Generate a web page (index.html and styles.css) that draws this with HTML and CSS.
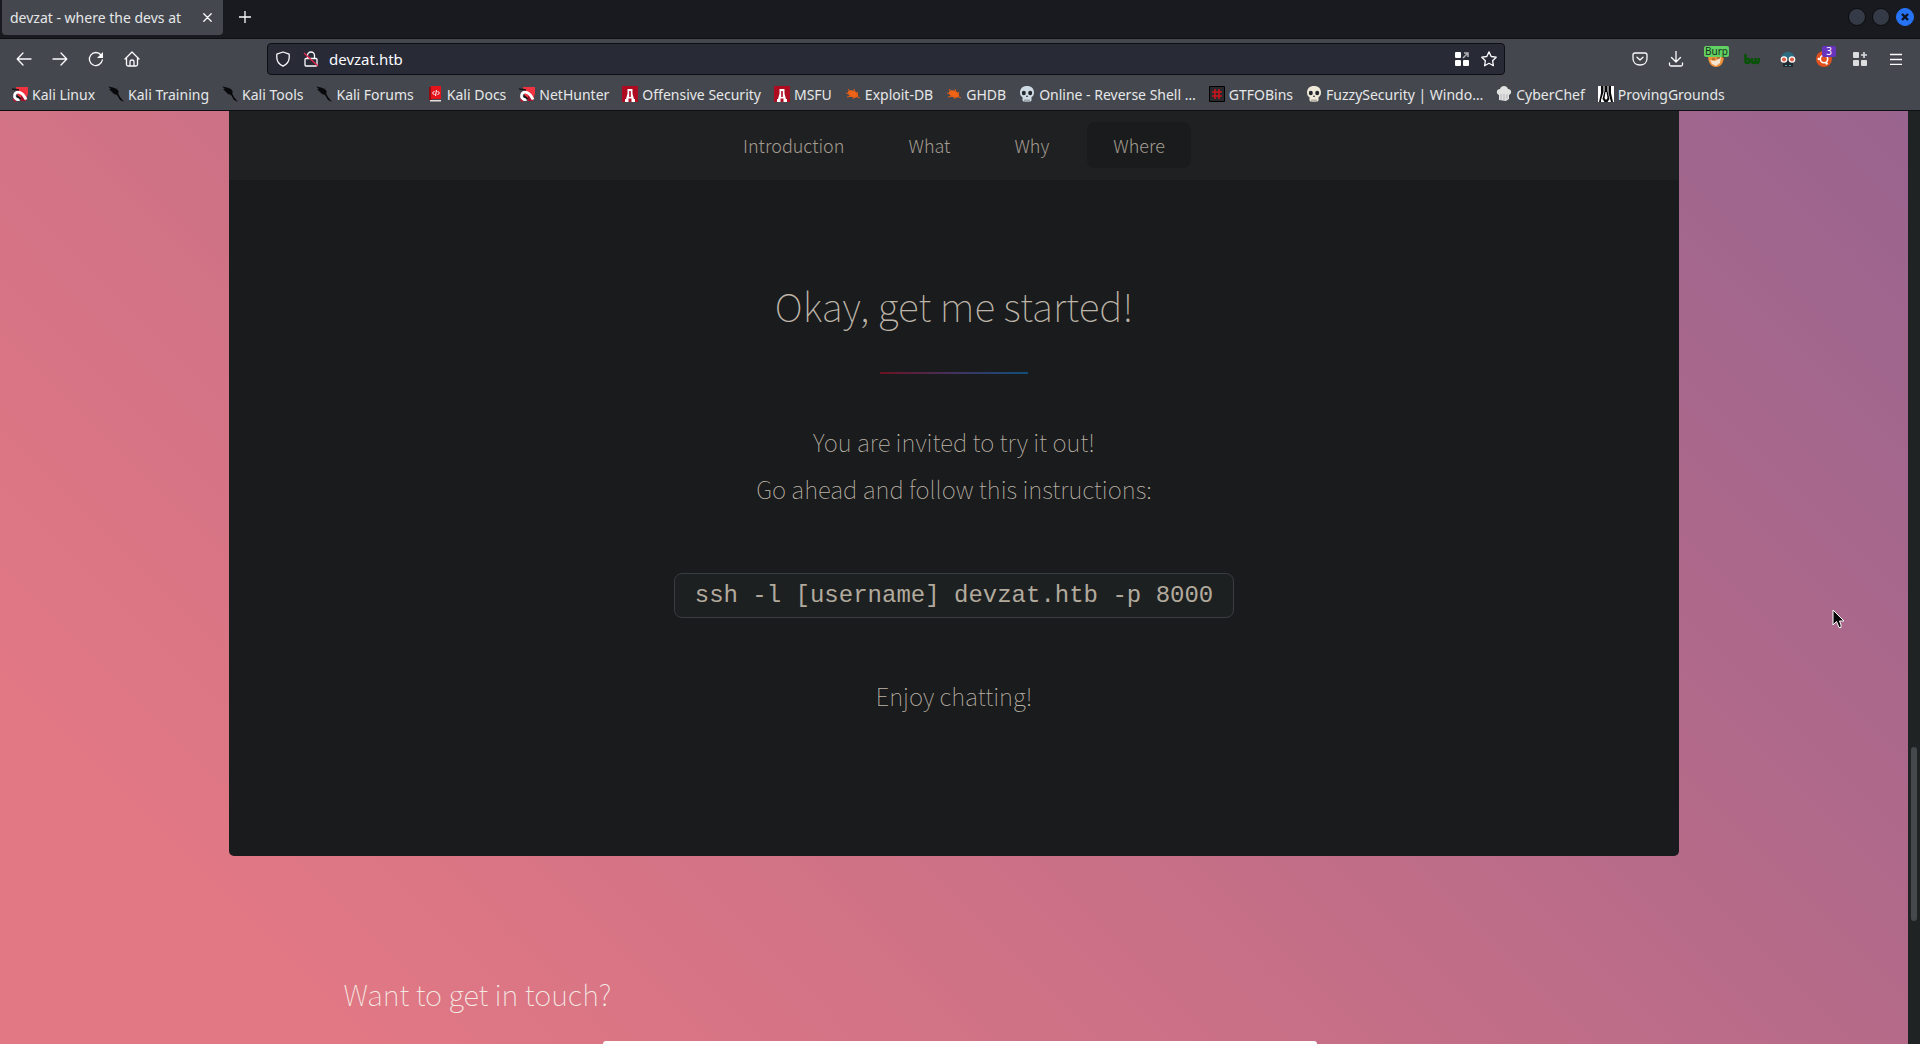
FILE: index.html
```html
<!DOCTYPE html>
<html lang="en">
<head>
<meta charset="utf-8">
<title>devzat - where the devs at</title>
<link rel="stylesheet" href="styles.css">
</head>
<body>
<svg class="defs" aria-hidden="true">
  <symbol id="dragon" viewBox="0 0 16 16"><path fill="#f2333f" d="M4 1h12v6l-2 8H9L5 8z"/><path fill="#a30f2c" d="M9 9l5 6h-5z"/><path fill="none" stroke="#fff" stroke-width="2.800" d="M14 13.500C12 9 10 7 7.500 6.300 4 5.500 1.800 8 2.500 10.800c.6 2.300 3 3.200 5 2.700"/><path stroke="#17181c" stroke-width="1.600" fill="none" d="M0 3l7 1M5 10l4 3"/><path stroke="#b81735" stroke-width="1.500" d="M1 13l3 3"/></symbol>
  <symbol id="kali" viewBox="0 0 16 16"><path fill="#08090a" d="M0 .5l5 1 4 1.500 2 3-1 1 2 4 4 5-4-2-3-5-3-1-2-2-3-3 2 0z"/></symbol>
  <symbol id="offsec" viewBox="0 0 16 16"><path fill="#ad0b20" d="M0 0h16v16H0z"/><path fill="#fff" d="M5.500 3h5v4.500l1.500 5.500h1v3h-3.500v-3.500h-3V16H3v-3h1l1.500-5.500z"/><path fill="#ad0b20" d="M7.200 5h1.600v6H7.200z"/></symbol>
  <symbol id="bug" viewBox="0 0 16 16"><ellipse cx="8" cy="8" rx="5.500" ry="3.200" transform="rotate(25 8 8)" fill="#f06418"/><path stroke="#e65c10" d="M3 3l3 4M9 3l1 4M1 7l4 1M13 6l-2 3M2 11l5-1M8 13l2-3M15 12l-4-2"/></symbol>
  <symbol id="skull" viewBox="0 0 16 16"><path fill="currentColor" d="M8 0c4.500 0 7 2.700 7 6.500 0 2.500-1 4-2.500 4.700V14c0 1.500-1.500 2-4.500 2s-4.500-.5-4.500-2v-2.800C2 10.500 1 9 1 6.500 1 2.700 3.500 0 8 0z"/><ellipse cx="4.800" cy="7" rx="2" ry="2.300" fill="#25282c"/><ellipse cx="11.200" cy="7" rx="2" ry="2.300" fill="#25282c"/><path fill="#25282c" d="M8 9l1 2H7z"/><path stroke="#25282c" stroke-width=".6" d="M6 13.500V16M8 13.500V16M10 13.500V16"/></symbol>
</svg>

<header class="browser">
  <div class="tabs">
    <div class="tab"><span>devzat - where the devs at</span>
      <button class="plain" aria-label="Close tab"><svg width="9" height="9" viewBox="0 0 9 9"><path class="line" d="M.8.8l7.400 7.400M8.200.8L.8 8.200"/></svg></button></div>
    <button class="plain new-tab" aria-label="New tab"><svg width="12" height="12" viewBox="0 0 12 12"><path class="line" d="M6 0v12M0 6h12"/></svg></button>
    <div class="window-buttons">
      <button class="dot" aria-label="Minimize"></button><button class="dot" aria-label="Maximize"></button><button class="dot close" aria-label="Close"><svg width="8" height="8" viewBox="0 0 8 8"><path d="M1 1l6 6M7 1L1 7" stroke="#0d1220" stroke-width="2.400"/></svg></button>
    </div>
  </div>

  <div class="toolbar">
    <div class="tools">
      <button class="tool" aria-label="Back"><svg width="16" height="16" viewBox="0 0 16 16"><path class="line" d="M15 8H1.500M7 2L1.200 8 7 14"/></svg></button>
      <button class="tool" aria-label="Forward"><svg width="16" height="16" viewBox="0 0 16 16"><path class="line" d="M1 8h13.500M9 2l5.800 6L9 14"/></svg></button>
      <button class="tool" aria-label="Reload"><svg width="16" height="16" viewBox="0 0 16 16"><path class="line" d="M14.300 9A6.500 6.500 0 1 1 13 4"/><path fill="#fbfbfe" d="M15 1v6H9z"/></svg></button>
      <button class="tool" aria-label="Home"><svg width="16" height="16" viewBox="0 0 16 16"><path class="line" d="M1 8l7-7 7 7M2.500 7v6.500q0 1.500 1.500 1.500h8q1.500 0 1.500-1.500V7M6 15v-4q0-2 2-2t2 2v4"/></svg></button>
    </div>
    <div class="urlbar">
      <svg width="16" height="16" viewBox="0 0 16 16"><path class="line" d="M8 1l6.200 2.200v3.300c0 4.200-2.700 7-6.200 8.700-3.500-1.700-6.200-4.500-6.200-8.700V3.200z"/></svg>
      <svg class="lock" width="16" height="16" viewBox="0 0 16 16"><path class="line" d="M4.500 7V4.500a3.500 3.500 0 0 1 7 0V7M3 7.500h10q1 0 1 1V14q0 1-1 1H3q-1 0-1-1V8.500q0-1 1-1z"/><path stroke="#e22850" stroke-width="1.500" d="M1 2l14 13"/></svg>
      <input type="text" aria-label="Address" value="devzat.htb">
      <button class="plain" aria-label="Extensions"><svg width="14" height="14" viewBox="0 0 14 14"><g fill="#fff"><rect width="6" height="6" rx="1"/><rect y="8" width="6" height="6" rx="1"/><rect x="8" y="8" width="6" height="6" rx="1"/></g><path stroke="#aeb0b4" stroke-width="1.500" fill="none" d="M8 6l5-5M9 1h4v4"/></svg></button>
      <button class="plain" aria-label="Bookmark"><svg width="16" height="16" viewBox="0 0 16 16"><path class="line" d="M8 .9l2.200 4.600 5 .7-3.600 3.500.8 5L8 12.300l-4.400 2.400.8-5L.8 6.200l5-.7z"/></svg></button>
    </div>
    <div class="tools">
      <button class="tool" aria-label="Pocket"><svg width="16" height="16" viewBox="0 0 16 16"><path class="line" d="M3 2h10q2 0 2 2v3.500c0 4-3 6.500-7 6.500s-7-2.500-7-6.500V4q0-2 2-2zM5 6.200L8 9l3-2.800"/></svg></button>
      <button class="tool download" aria-label="Downloads"><svg width="16" height="16" viewBox="0 0 16 16"><path class="line" d="M8 0v10.500M3.500 6.500L8 11l4.500-4.500M1.500 12v1.500q0 1.500 1.500 1.500h10q1.500 0 1.500-1.500V12"/></svg></button>
      <button class="tool" aria-label="Proxy"><svg width="16" height="16" viewBox="0 0 16 16"><path fill="#ed8e38" d="M0 4l3 1 5-3 5 3 3-1c0 8-3 12-8 12S0 12 0 4z"/><path fill="#f5e4d0" d="M2 9l4 1 3-1 4-3-1 6-4 3-4-2z"/><path stroke="#76502d" d="M4 8h3M9 7h3"/></svg><span class="badge burp">Burp</span></button>
      <button class="tool" aria-label="BuiltWith"><svg width="16" height="12" viewBox="0 0 16 12"><path fill="none" stroke="#075207" stroke-width="2.500" d="M1.500 1v7.500q0 1.500 2 1.500t2-2-2-2h-2M8 5v3q0 2 1.500 2t2-2V5v3q0 2 1.500 2t1.700-2V5"/></svg></button>
      <button class="tool" aria-label="User agent"><svg width="16" height="16" viewBox="0 0 16 16"><path fill="#2c6b80" d="M2 8C1 3 4 1 8 1s7 2 6 7z"/><path fill="#222a31" d="M3 10h10v6H3z"/><circle cx="4" cy="8.500" r="3.300" fill="#fff"/><circle cx="12" cy="8.500" r="3.300" fill="#fff"/><circle cx="4" cy="8.500" r="2.100" fill="#df6048"/><circle cx="12" cy="8.500" r="2.100" fill="#df6048"/><path stroke="#5aa1b4" d="M5 14.500h2M9 14.500h2"/></svg></button>
      <button class="tool" aria-label="Scripts"><svg width="16" height="16" viewBox="0 0 16 16"><circle cx="8" cy="8" r="8" fill="#e0501d"/><circle cx="8" cy="8" r="3.700" fill="none" stroke="#fff" stroke-width="1.600"/><g fill="#fff"><circle cx="2.800" cy="8" r="1.200"/><circle cx="10.600" cy="12.500" r="1.200"/><circle cx="10.600" cy="3.500" r="1.200"/></g></svg><span class="badge count">3</span></button>
      <button class="tool" aria-label="Add-ons"><svg width="14" height="14" viewBox="0 0 14 14"><g fill="#dcdddf"><rect width="6" height="6" rx="1"/><rect y="8" width="6" height="6" rx="1"/><rect x="8" y="8" width="6" height="6" rx="1"/><path d="M10.200 0h1.600v2.200H14v1.600h-2.200V6h-1.600V3.800H8V2.200h2.200z"/></g></svg></button>
      <button class="tool" aria-label="Menu"><svg width="12" height="12" viewBox="0 0 12 12"><path class="line" d="M0 1.500h12M0 6.500h12M0 11.500h12"/></svg></button>
    </div>
  </div>

  <nav class="bookmarks" aria-label="Bookmarks">
    <a href="#"><svg><use href="#dragon"/></svg>Kali Linux</a>
    <a href="#"><svg><use href="#kali"/></svg>Kali Training</a>
    <a href="#"><svg><use href="#kali"/></svg>Kali Tools</a>
    <a href="#"><svg><use href="#kali"/></svg>Kali Forums</a>
    <a href="#"><svg viewBox="0 0 16 16"><path fill="#8e1016" d="M2 1h3v13H2z"/><path fill="#e5141a" d="M4 0h10v13H4z"/><path fill="#e8dcdc" d="M3 14h11v1.500H3z"/><path fill="none" stroke="#fff" d="M7.500 5L5.500 7l2 2M10.500 5l2 2-2 2M9.500 4l-1 6"/></svg>Kali Docs</a>
    <a href="#"><svg><use href="#dragon"/></svg>NetHunter</a>
    <a href="#"><svg><use href="#offsec"/></svg>Offensive Security</a>
    <a href="#"><svg><use href="#offsec"/></svg>MSFU</a>
    <a href="#"><svg><use href="#bug"/></svg>Exploit-DB</a>
    <a href="#"><svg><use href="#bug"/></svg>GHDB</a>
    <a href="#"><svg class="skull-blue"><use href="#skull"/></svg>Online - Reverse Shell …</a>
    <a href="#"><svg viewBox="0 0 16 16"><path fill="#282a2e" stroke="#000" d="M.5.5h15v15H.5z"/><path stroke="#c9141c" stroke-width="1.600" d="M6 3v10M10 3v10M3 6h10M3 10h10"/></svg>GTFOBins</a>
    <a href="#"><svg class="skull-cream"><use href="#skull"/></svg>FuzzySecurity | Windo…</a>
    <a href="#"><svg viewBox="0 0 16 16"><path fill="#e2e2e2" d="M3 14V9C0 8 0 3 4 3c1-4 7-4 8 0 4 0 4 5 1 6v4l-3 2z"/><path stroke="#b5b5b5" d="M5 8v6M8 8v6M11 8v5"/></svg>CyberChef</a>
    <a href="#"><svg viewBox="0 0 16 16"><path fill="#fff" d="M0 0h16v16H0z"/><path fill="#08090a" d="M3 0h2.500v6L3 14v2H1l2-9zM6.500 0h3v5l2 8-2 3h-3l-2-3 2-8zM10.500 0H13v7l2 9h-2l-2.500-9z"/><path fill="#fff" d="M7.500 6h1l1 6-1.500 2-1.500-2z"/></svg>ProvingGrounds</a>
  </nav>
</header>

<div class="viewport">
  <div class="page">
    <main class="wrapper">
      <nav class="site-nav">
        <a href="#intro">Introduction</a><a href="#what">What</a><a href="#why">Why</a><a href="#where" class="active">Where</a>
      </nav>
      <section class="start" id="where">
        <h2>Okay, get me started!</h2>
        <p>You are invited to try it out!<br>Go ahead and follow this instructions:</p>
        <code>ssh -l [username] devzat.htb -p 8000</code>
        <p>Enjoy chatting!</p>
      </section>
    </main>
    <footer class="footer"><h2>Want to get in touch?</h2></footer>
    <div class="popup"></div>
    <svg class="cursor" width="14" height="20" viewBox="0 0 14 20"><path fill="#080808" stroke="#fff" d="M1 1v15l3.500-3.500L7 18.500h2V16l-1.500-4H12z"/></svg>
  </div>
  <div class="scrollbar"><div class="track-top"></div><div class="thumb"></div><div class="track-bottom"></div></div>
</div>
</body>
</html>
```
FILE: styles.css
```css
* { box-sizing: border-box; }
body {
  margin: 0;
  height: 100vh;
  display: flex;
  flex-direction: column;
  overflow: hidden;
  background: #1a1b1d;
  font-family: "Noto Sans", sans-serif;
  font-size: 14px;
}
a { color: inherit; text-decoration: none; }
button { font: inherit; color: inherit; background: none; border: 0; padding: 0; }
svg { display: block; flex: none; }
.defs { position: absolute; width: 0; height: 0; }
.line { fill: none; stroke: #fbfbfe; stroke-width: 1.3; stroke-linejoin: round; stroke-linecap: round; }

/* Browser chrome */
.browser { flex: none; color: #e6e7e9; background: #44474d; border-bottom: 1px solid #0e0f12; }
.tabs { display: flex; align-items: center; height: 39px; padding-left: 2px; background: #191a1f; border-bottom: 1px solid #0e0f12; }
.tab {
  display: flex; align-items: center; justify-content: space-between;
  align-self: flex-start;
  width: 221px; height: 35px; padding: 0 11px 0 8px;
  background: #44474d; border-radius: 0 0 4px 4px;
}
.plain { display: flex; align-items: center; }
.new-tab { margin: 0 0 4px 16px; }
.window-buttons { display: flex; gap: 6px; margin: 0 6px 4px auto; }
.dot { display: flex; align-items: center; justify-content: center; width: 18px; height: 18px; border-radius: 50%; background: #353a47; border: 1px solid #0b0c0f; }
.dot.close { background: #2673f5; border-color: #2673f5; }

.toolbar { display: flex; align-items: center; justify-content: space-between; height: 40px; padding: 0 6px; }
.tools { display: flex; }
.tool { position: relative; display: flex; align-items: center; justify-content: center; width: 36px; height: 36px; }
.download { margin-right: 4px; }
.badge { position: absolute; font-size: 10px; line-height: 11px; border-radius: 2px; }
.burp { top: 5px; left: 6px; padding: 0 1px; color: #14301a; background: #62d163; }
.count { top: 5px; left: 16px; width: 14px; text-align: center; color: #fff; background: #6934bd; }
.urlbar {
  display: flex; align-items: center; flex: 0 1 1238px;
  height: 32px; padding: 0 7px; gap: 12px;
  background: #282a36; border: 1px solid #0e0f12; border-radius: 4px;
}
.urlbar input { flex: 1; min-width: 0; padding: 0; border: 0; outline: 0; background: none; font: inherit; font-size: 15px; color: #fbfbfe; }
.lock { margin-right: -2px; }

.bookmarks { display: flex; align-items: center; height: 31px; padding: 0 12px 1px; gap: 13px; white-space: nowrap; }
.bookmarks a { display: flex; align-items: center; gap: 4px; }
.bookmarks svg { width: 16px; height: 16px; }
.skull-blue { color: #cfdbe3; }
.skull-cream { color: #efe9d9; }

/* Web page */
.viewport { flex: 1; min-height: 0; display: flex; }
.page {
  position: relative; flex: 1; min-width: 0; overflow: hidden;
  font-family: "Noto Sans CJK SC", sans-serif;
  font-weight: 100;
  color: #bdb5a8;
  background: linear-gradient(45deg, #e27884 12%, #cd7186 40%, #b46a89 68%, #99648f 100%);
}
.wrapper { width: 76%; margin: 0 auto; background: #1a1b1d; border-radius: 0 0 5px 5px; text-align: center; }
.site-nav { display: flex; justify-content: center; gap: 12px; padding: 11px 0 12px; background: #1f2022; color: #a39c90; font-size: 18px; font-weight: 300; line-height: 46px; }
.site-nav a { padding: 0 26px; border-radius: 8px; }
.site-nav .active { background: #1a1b1d; }
.start { display: flex; flex-direction: column; align-items: center; padding: 92px 32px 137px; font-size: 24px; line-height: 47px; }
.start h2 { margin: 0; padding-bottom: 44px; font-size: 39px; font-weight: 100; line-height: 66px; }
.start h2::after { content: ""; display: block; width: 148px; height: 2px; margin: 34px auto 0; background: linear-gradient(90deg, #6b1220, #43325f 50%, #0f4f7a); }
.start p { margin: 0; }
.start code {
  margin: 61px 0 54px;
  padding: 0 20px;
  font-family: "Liberation Mono", monospace; font-size: 24px; font-weight: 400; line-height: 43px;
  color: #b2aa9d; background: #1d2021; border: 1px solid #393d40; border-radius: 8px;
}
.footer { padding: 104px 18%; }
.footer h2 { margin: 0; font-size: 29px; font-weight: 100; line-height: 66px; color: #f4ebe5; }
.popup { position: absolute; left: 603px; right: 591px; bottom: 0; height: 3px; background: #fff; border-radius: 8px 8px 0 0; }
.cursor { position: absolute; left: 1832px; top: 498px; }
.scrollbar { display: flex; flex-direction: column; align-items: center; width: 12px; background: #1f2324; }
.track-top { flex: 636; }
.thumb { flex: 174; width: 6px; background: #46494b; border-radius: 3px; }
.track-bottom { flex: 123; }
```
